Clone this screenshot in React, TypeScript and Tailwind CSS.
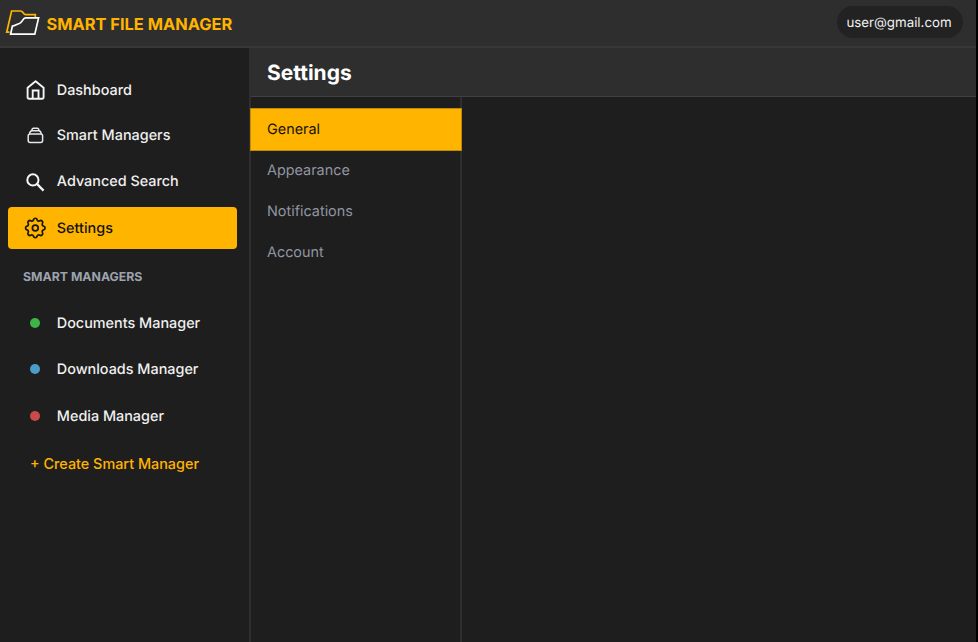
import type { ReactNode } from "react";

function FolderLogo() {
  return (
    <svg width="36" height="28" viewBox="0 0 36 28" fill="none" strokeWidth="1.7" className="shrink-0">
      <path d="M4.5 23.2H1.7L6.6 2H15.5C18.5 2 18.2 5.6 20.6 5.6H30.3V8.6" stroke="#ffb400" />
      <path d="M5.6 25.2L7.4 17.1C10.5 16.7 11.5 15.2 14.4 14.5C17.6 13.6 17.7 8.9 20.5 8.9H33.6L29.8 25.2Z" stroke="#ffffff" />
    </svg>
  );
}

function HomeIcon() {
  return (
    <svg width="22" height="22" viewBox="0 0 22 22" fill="none" stroke="#f3f4f8" strokeWidth="1.9" strokeLinejoin="round" className="translate-x-[0.6px]">
      <path d="M3 8.7L11 2.3L19 8.7V18Q19 19.8 17.4 19.8H4.6Q3 19.8 3 18Z" />
      <path d="M8.1 19.8V11.5H13.9V19.8" strokeLinejoin="miter" />
    </svg>
  );
}

function StackIcon() {
  return (
    <svg width="22" height="22" viewBox="0 0 22 22" fill="none" stroke="#e5e7eb" strokeWidth="1.5" strokeLinejoin="round" className="translate-x-[0.4px]">
      <rect x="3.8" y="8.9" width="14.4" height="8.7" rx="2" />
      <path d="M5.1 8.9C5.4 6.6 6 5.7 7.6 5.7H14.4C16 5.7 16.6 6.6 16.9 8.9" />
      <path d="M7.4 5.7C7.6 3.8 7.9 3.2 9 3.2H13C14.1 3.2 14.4 3.8 14.6 5.7" />
    </svg>
  );
}

function SearchIcon() {
  return (
    <svg width="22" height="22" viewBox="0 0 22 22" fill="none" stroke="#f5f5f5" strokeWidth="2">
      <circle cx="8.9" cy="9.9" r="5.6" />
      <path d="M12.9 13.9L19.6 20.6" strokeWidth="2.2" />
    </svg>
  );
}

function GearIcon() {
  return (
    <svg width="26" height="26" viewBox="0 0 24 24" fill="none" stroke="#1a1608" strokeWidth="1.6" strokeLinejoin="round" strokeLinecap="round" className="-mx-[2px] shrink-0 translate-x-[0.3px]">
      <circle cx="12" cy="12" r="2.7" />
      <path d="M10.325 4.317c.426-1.756 2.924-1.756 3.35 0a1.724 1.724 0 0 0 2.573 1.066c1.543-.94 3.31.826 2.37 2.37a1.724 1.724 0 0 0 1.065 2.572c1.756.426 1.756 2.924 0 3.35a1.724 1.724 0 0 0-1.066 2.573c.94 1.543-.826 3.31-2.37 2.37a1.724 1.724 0 0 0-2.572 1.065c-.426 1.756-2.924 1.756-3.35 0a1.724 1.724 0 0 0-2.573-1.066c-1.543.94-3.31-.826-2.37-2.37a1.724 1.724 0 0 0-1.065-2.572c-1.756-.426-1.756-2.924 0-3.35a1.724 1.724 0 0 0 1.066-2.573c-.94-1.543.826-3.31 2.37-2.37 1 .608 2.296.07 2.572-1.065z" />
    </svg>
  );
}

function NavItem({ icon, label, className, drop = "pt-[2px]" }: { icon: ReactNode; label: string; className: string; drop?: string }) {
  return (
    <a className={`flex items-center pl-4 text-[14.4px] font-medium ${className}`}>
      <span className="flex w-[22px] shrink-0 justify-center">{icon}</span>
      <span className={`ml-[10.8px] ${drop}`}>{label}</span>
    </a>
  );
}

function Dot({ color }: { color: string }) {
  return <span className={`mr-[0.5px] size-[10px] rounded-full ${color}`} />;
}

export default function App() {
  return (
    <div className="flex h-[642px] w-[978px] flex-col overflow-hidden border-r-2 border-black bg-[#1e1e1e] font-['Inter',sans-serif] text-[#f0f0f0] [text-rendering:geometricPrecision]">
      <header className="flex h-12 shrink-0 items-center border-b-2 border-[#373737] bg-[#2e2e2e] pr-[13px] pl-[5px]">
        <FolderLogo />
        <span className="mt-[3px] ml-[5.5px] text-[16.4px] font-bold text-[#ffb400]">SMART FILE MANAGER</span>
        <span className="mb-[2px] ml-auto flex h-8 w-[126px] items-center justify-center rounded-full bg-[#222222] pt-[3px] pr-[2px] text-[13.3px]">
          user@gmail.com
        </span>
      </header>
      <div className="flex flex-1">
        <nav className="flex w-[251px] shrink-0 flex-col border-r-2 border-[#2e2e2e] pt-[19px] pr-3 pl-2">
          <NavItem icon={<HomeIcon />} label="Dashboard" className="h-[46px]" />
          <NavItem icon={<StackIcon />} label="Smart Managers" className="h-[45px]" drop="pt-0" />
          <NavItem icon={<SearchIcon />} label="Advanced Search" className="h-[46px]" />
          <NavItem icon={<GearIcon />} label="Settings" className="mt-[3px] h-[42px] rounded bg-[#ffb400] text-[#111111]" />
          <h2 className="mt-5 ml-[15px] h-4 text-[12.3px] leading-4 font-bold text-[#9ca3af]">SMART MANAGERS</h2>
          <NavItem icon={<Dot color="bg-[#3bb54a]" />} label="Documents Manager" className="mt-[15px] h-[46px]" />
          <NavItem icon={<Dot color="bg-[#4a9cc9]" />} label="Downloads Manager" className="h-[46px]" />
          <NavItem icon={<Dot color="bg-[#c94a4a]" />} label="Media Manager" className="h-[47px]" />
          <button className="ml-[22px] h-12 pt-[2px] text-left text-[14.4px] font-medium text-[#ffb400]">+ Create Smart Manager</button>
        </nav>
        <main className="flex flex-1 flex-col">
          <div className="flex h-[49px] shrink-0 items-center border-b border-[#404040] bg-[#2e2e2e] pt-[3px] pl-4">
            <h1 className="text-[21px] font-bold text-white">Settings</h1>
          </div>
          <div className="flex w-[211px] flex-1 flex-col border-r-2 border-[#2e2e2e] pt-[11px] text-[14.4px] text-[#9195a1]">
            <a className="-mr-[2px] -ml-px flex h-[43px] items-center border border-[#c08a08] bg-[#ffb400] pl-4 text-[#171304]">General</a>
            <a className="flex h-[41px] items-center pb-px pl-4">Appearance</a>
            <a className="flex h-[41px] items-center pb-px pl-4">Notifications</a>
            <a className="flex h-[41px] items-center pb-px pl-4">Account</a>
          </div>
        </main>
      </div>
    </div>
  );
}
